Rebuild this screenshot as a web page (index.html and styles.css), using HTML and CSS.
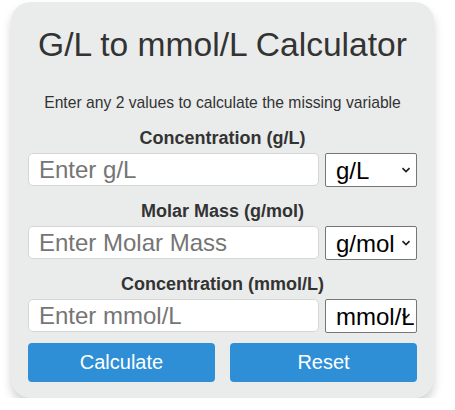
FILE: index.html
```html
<!DOCTYPE html>
<html lang="en">
<head>
    <meta charset="UTF-8">
    <meta name="viewport" content="width=device-width, initial-scale=1.0">
    <title>G/L to mmol/L Calculator</title>
    <link rel="stylesheet" href="styles.css">
</head>
<body>
    <div class="calculator">
        <h1>G/L to mmol/L Calculator</h1>
        <p class="hint">Enter any 2 values to calculate the missing variable</p>
        <form id="calcForm">
            <div class="field">
                <label for="gramsPerLiter">Concentration (g/L)</label>
                <div class="field-row">
                    <input type="number" id="gramsPerLiter" placeholder="Enter g/L">
                    <select id="gramsUnit">
                        <option>g/L</option>
                        <option>mg/L</option>
                    </select>
                </div>
            </div>
            <div class="field">
                <label for="molarMass">Molar Mass (g/mol)</label>
                <div class="field-row">
                    <input type="number" id="molarMass" placeholder="Enter Molar Mass">
                    <select id="massUnit">
                        <option>g/mol</option>
                        <option>kg/mol</option>
                    </select>
                </div>
            </div>
            <div class="field">
                <label for="mmolPerLiter">Concentration (mmol/L)</label>
                <div class="field-row">
                    <input type="number" id="mmolPerLiter" placeholder="Enter mmol/L">
                    <select id="mmolUnit">
                        <option>mmol/L</option>
                        <option>mol/L</option>
                    </select>
                </div>
            </div>
            <div class="buttons">
                <button type="submit">Calculate</button>
                <button type="reset">Reset</button>
            </div>
        </form>
    </div>
    <script>
        document.getElementById('calcForm').addEventListener('submit', function(event) {
            event.preventDefault();

            const gl = parseFloat(document.getElementById('gramsPerLiter').value);
            const mm = parseFloat(document.getElementById('molarMass').value);
            const mmol = parseFloat(document.getElementById('mmolPerLiter').value);

            // Fill in whichever value is missing
            if (!isNaN(gl) && !isNaN(mm)) {
                document.getElementById('mmolPerLiter').value = (gl / mm * 1000).toFixed(4);
            } else if (!isNaN(mmol) && !isNaN(mm)) {
                document.getElementById('gramsPerLiter').value = (mmol * mm / 1000).toFixed(4);
            } else if (!isNaN(gl) && !isNaN(mmol)) {
                document.getElementById('molarMass').value = (gl / mmol * 1000).toFixed(4);
            }
        });
    </script>
</body>
</html>
```

FILE: styles.css
```css
body {
    font-family: Arial, "Liberation Sans", sans-serif;
    margin: 0;
    padding: 2px 0 0 11px;
    background-color: #fff;
    color: #333;
}

.calculator {
    width: 389px;
    padding: 24px 17px 16px 17px;
    background-color: #eaecec;
    border-radius: 20px;
    box-shadow: 0 6px 10px rgba(0, 0, 0, 0.18);
}

h1 {
    margin: 0;
    font-size: 33.6px;
    font-weight: normal;
    text-align: center;
}

.hint {
    margin: 30px 0 0;
    font-size: 15.7px;
    text-align: center;
}

form {
    margin-top: 16px;
}

.field {
    margin-bottom: 14px;
}

.field label {
    display: block;
    font-size: 18px;
    font-weight: bold;
    text-align: center;
    margin-bottom: 4px;
}

.field-row {
    display: flex;
    align-items: flex-start;
    gap: 6px;
}

input {
    flex: 1;
    min-width: 0;
    height: 33px;
    box-sizing: border-box;
    padding: 0 10px;
    font-family: inherit;
    font-size: 24px;
    border: 1px solid #d6d6d6;
    border-radius: 5px;
    background-color: #fff;
}

input::placeholder {
    color: #757575;
}

select {
    appearance: none;
    width: 92px;
    height: 34px;
    box-sizing: border-box;
    padding: 0 0 0 10px;
    font-family: inherit;
    font-size: 24px;
    color: #000;
    border: 1px solid #767676;
    border-radius: 2px;
    background: #fff url("data:image/svg+xml,%3Csvg xmlns='http://www.w3.org/2000/svg' width='10' height='6' viewBox='0 0 10 6'%3E%3Cpath d='M1.5 1.2 5 4.6 8.5 1.2' fill='none' stroke='%23222' stroke-width='1.7'/%3E%3C/svg%3E") no-repeat right 5px center;
}

.buttons {
    display: flex;
    gap: 15px;
    margin-top: -4px;
}

button {
    flex: 1;
    height: 39px;
    font-family: inherit;
    font-size: 20px;
    color: #fff;
    background-color: #2e8fd7;
    border: none;
    border-radius: 4px;
    cursor: pointer;
}

button:hover {
    background-color: #2479b9;
}
```
